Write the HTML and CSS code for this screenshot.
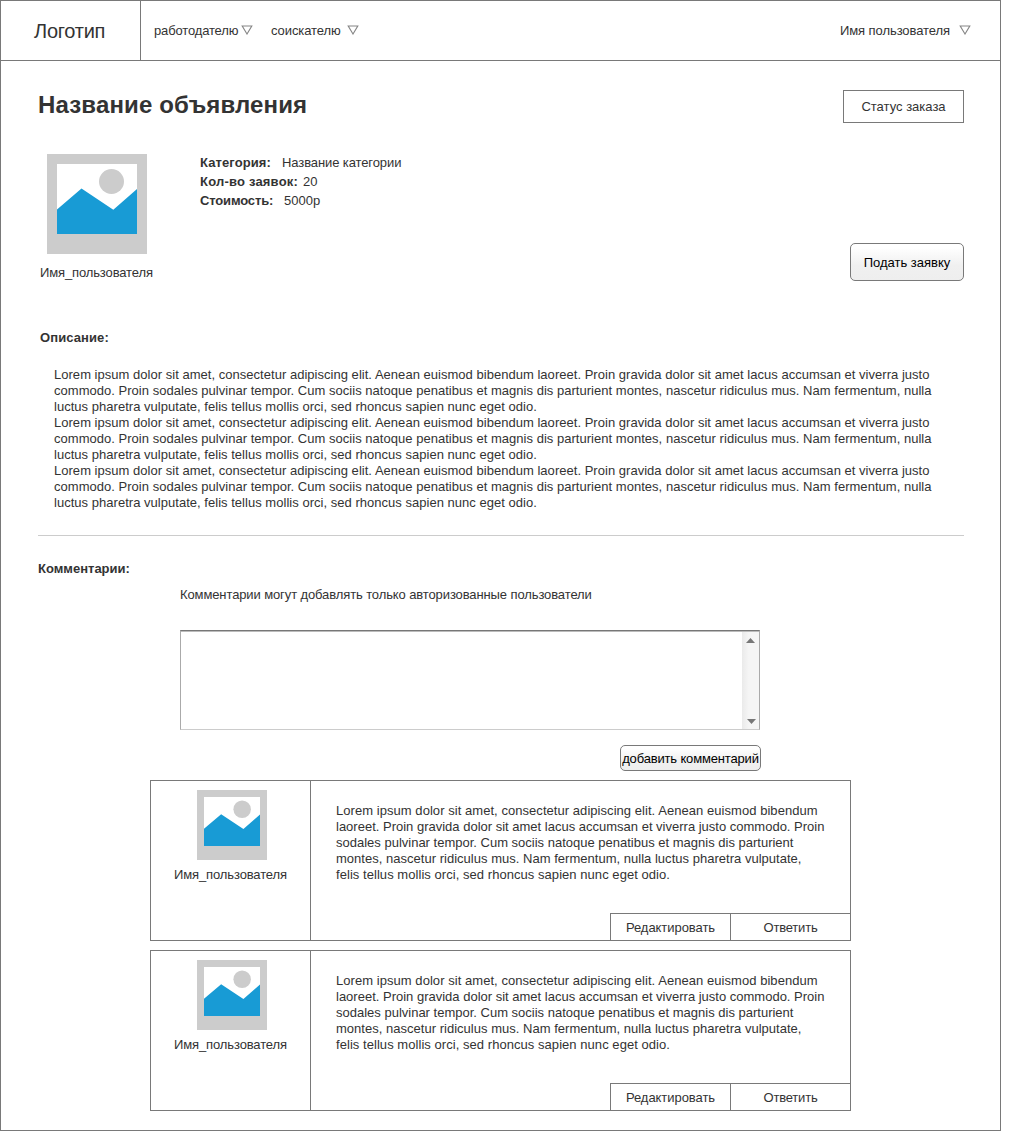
FILE: index.html
```html
<!DOCTYPE html>
<html lang="ru">
<head>
<meta charset="utf-8">
<title>Название объявления</title>
<link rel="stylesheet" href="styles.css">
</head>
<body>
<svg class="defs" width="0" height="0" aria-hidden="true">
  <symbol id="picture" viewBox="0 0 100 100">
    <rect width="100" height="100" fill="#ccc"/>
    <rect x="10" y="10" width="80" height="70" fill="#fff"/>
    <circle cx="64.5" cy="27.5" r="12.5" fill="#ccc"/>
    <path d="M10 55.5 34.5 34.5 66.3 55.7 90 35V80H10Z" fill="#189bd5"/>
  </symbol>
  <symbol id="caret" viewBox="0 0 12 10">
    <path d="M1.2 1H10.8L6 9Z" fill="#fff" stroke="#858585" stroke-width="1.1"/>
  </symbol>
</svg>
<div class="page">
  <header class="header">
    <a class="logo">Логотип</a>
    <nav class="nav">
      <a class="nav-item employer"><span>работодателю</span><svg class="caret"><use href="#caret"/></svg></a>
      <a class="nav-item seeker"><span>соискателю</span><svg class="caret"><use href="#caret"/></svg></a>
    </nav>
    <a class="nav-item account"><span>Имя пользователя</span><svg class="caret"><use href="#caret"/></svg></a>
  </header>
  <main class="main">
    <div class="title-row">
      <h1 class="title">Название объявления</h1>
      <div class="status">Статус заказа</div>
    </div>
    <section class="summary">
      <div class="author">
        <svg class="author-picture"><use href="#picture"/></svg>
        <span class="user-name">Имя_пользователя</span>
      </div>
      <dl class="facts">
        <div class="fact"><dt class="label-category">Категория:</dt><dd class="fact-category">Название категории</dd></div>
        <div class="fact"><dt class="label-count">Кол-во заявок:</dt><dd class="fact-count">20</dd></div>
        <div class="fact"><dt class="label-cost">Стоимость:</dt><dd class="fact-cost">5000р</dd></div>
      </dl>
      <button class="button apply">Подать заявку</button>
    </section>
    <h2 class="subtitle description-title">Описание:</h2>
    <p class="description">Lorem ipsum dolor sit amet, consectetur adipiscing elit. Aenean euismod bibendum laoreet. Proin gravida dolor sit amet lacus accumsan et viverra justo<br>commodo. Proin sodales pulvinar tempor. Cum sociis natoque penatibus et magnis dis parturient montes, nascetur ridiculus mus. Nam fermentum, nulla<br>luctus pharetra vulputate, felis tellus mollis orci, sed rhoncus sapien nunc eget odio.<br>Lorem ipsum dolor sit amet, consectetur adipiscing elit. Aenean euismod bibendum laoreet. Proin gravida dolor sit amet lacus accumsan et viverra justo<br>commodo. Proin sodales pulvinar tempor. Cum sociis natoque penatibus et magnis dis parturient montes, nascetur ridiculus mus. Nam fermentum, nulla<br>luctus pharetra vulputate, felis tellus mollis orci, sed rhoncus sapien nunc eget odio.<br>Lorem ipsum dolor sit amet, consectetur adipiscing elit. Aenean euismod bibendum laoreet. Proin gravida dolor sit amet lacus accumsan et viverra justo<br>commodo. Proin sodales pulvinar tempor. Cum sociis natoque penatibus et magnis dis parturient montes, nascetur ridiculus mus. Nam fermentum, nulla<br>luctus pharetra vulputate, felis tellus mollis orci, sed rhoncus sapien nunc eget odio.</p>
    <section class="comments">
      <h2 class="subtitle comments-title">Комментарии:</h2>
      <form class="comment-form">
        <p class="note">Комментарии могут добавлять только авторизованные пользователи</p>
        <div class="editor">
          <div class="scrollbar">
            <svg width="9" height="5"><path d="M0 5 4.5 0 9 5Z" fill="#777"/></svg>
            <svg class="scroll-down" width="9" height="5"><path d="M0 0 4.5 5 9 0Z" fill="#777"/></svg>
          </div>
        </div>
        <button class="button add" type="button">добавить комментарий</button>
      </form>
      <div class="comment-list">
        <article class="comment">
          <div class="comment-author">
            <svg class="comment-picture"><use href="#picture"/></svg>
            <span class="user-name">Имя_пользователя</span>
          </div>
          <div class="comment-body">
            <p class="comment-text"><span class="loose">Lorem ipsum dolor sit amet, consectetur adipiscing elit. Aenean euismod bibendum</span><br>laoreet. Proin gravida dolor sit amet lacus accumsan et viverra justo commodo. Proin<br>sodales pulvinar tempor. Cum sociis natoque penatibus et magnis dis parturient<br><span class="slight">montes, nascetur ridiculus mus. Nam fermentum, nulla luctus pharetra vulputate,</span><br><span class="loose">felis tellus mollis orci, sed rhoncus sapien nunc eget odio.</span></p>
            <div class="actions"><a class="action">Редактировать</a><a class="action reply">Ответить</a></div>
          </div>
        </article>
        <article class="comment">
          <div class="comment-author">
            <svg class="comment-picture"><use href="#picture"/></svg>
            <span class="user-name">Имя_пользователя</span>
          </div>
          <div class="comment-body">
            <p class="comment-text"><span class="loose">Lorem ipsum dolor sit amet, consectetur adipiscing elit. Aenean euismod bibendum</span><br>laoreet. Proin gravida dolor sit amet lacus accumsan et viverra justo commodo. Proin<br>sodales pulvinar tempor. Cum sociis natoque penatibus et magnis dis parturient<br><span class="slight">montes, nascetur ridiculus mus. Nam fermentum, nulla luctus pharetra vulputate,</span><br><span class="loose">felis tellus mollis orci, sed rhoncus sapien nunc eget odio.</span></p>
            <div class="actions"><a class="action">Редактировать</a><a class="action reply">Ответить</a></div>
          </div>
        </article>
      </div>
    </section>
  </main>
</div>
</body>
</html>
```
FILE: styles.css
```css
* { box-sizing: border-box; }
body {
  margin: 0;
  background: #fff;
  color: #333;
  font: 13px/16px "Liberation Sans", Arial, sans-serif;
  white-space: nowrap;
}
h1, h2, p, dl, dd { margin: 0; }
svg { display: block; flex: none; }
.defs { position: absolute; }

.page { width: 1001px; height: 1131px; border: 1px solid #797979; }

.header { display: flex; height: 60px; border-bottom: 1px solid #797979; }
.logo {
  width: 140px;
  border-right: 1px solid #797979;
  padding: 18px 0 0 33px;
  font-size: 20px;
  line-height: 24px;
  letter-spacing: -0.25px;
}
.nav { display: flex; flex: 1; }
.nav-item { display: flex; justify-content: space-between; padding-top: 22px; height: 59px; }
.employer { width: 99px; margin-left: 13px; letter-spacing: -0.15px; }
.seeker { width: 88px; margin-left: 18px; letter-spacing: -0.08px; }
.account { width: 132px; margin-right: 29px; padding-left: 1px; letter-spacing: -0.08px; }
.caret { width: 12px; height: 10px; margin-top: 2px; }

.main { padding: 29px 36px 0 37px; }
.title-row { display: flex; justify-content: space-between; height: 64px; }
.title { font-size: 24px; line-height: 30px; letter-spacing: 0.14px; }
.status {
  display: flex;
  justify-content: center;
  width: 121px;
  height: 33px;
  padding-top: 8px;
  border: 1px solid #797979;
}

.summary { display: flex; height: 176px; }
.author { width: 162px; padding-left: 2px; }
.author-picture { width: 100px; height: 100px; margin: 0 0 11px 7px; }
.user-name { letter-spacing: -0.13px; }
.facts { flex: 1; margin-top: -1px; line-height: 19px; }
.fact { display: flex; }
dt, .subtitle { font-weight: bold; }
.label-category { width: 71px; letter-spacing: 0.1px; }
.label-count { width: 98px; letter-spacing: 0.2px; }
.label-cost { width: 73px; letter-spacing: -0.15px; }
.fact-category { margin-left: 11px; letter-spacing: -0.1px; }
.fact-count { margin-left: 5px; }
.fact-cost { margin-left: 11px; }

.button {
  display: flex;
  justify-content: center;
  align-items: center;
  padding: 0;
  border: 1px solid #797979;
  border-radius: 5px;
  background: linear-gradient(#fff 10%, #f0f0f0 60%, #eee);
  color: #000;
  font: inherit;
}
.apply { width: 114px; height: 38px; margin-top: 89px; padding-top: 2px; }
.add { width: 141px; height: 26px; margin: 15px 0 0 440px; padding-top: 1px; letter-spacing: -0.16px; }

.subtitle { font-size: 13px; }
.description-title { margin-left: 2px; letter-spacing: 0.1px; }
.description {
  margin-top: 21px;
  padding: 0 0 24px 16px;
  border-bottom: 1px solid #ccc;
  letter-spacing: 0.027px;
}
.comments { padding-top: 25px; }
.comment-form { width: 723px; padding: 10px 0 0 142px; }
.note { letter-spacing: -0.11px; }
.editor {
  display: flex;
  justify-content: flex-end;
  width: 580px;
  height: 100px;
  margin-top: 27px;
  border: 1px solid #ccc;
  border-top: 1px solid #777;
  border-left-color: #aaa;
  border-right-color: #aaa;
  box-shadow: inset 0 1px #bbb;
}
.scrollbar {
  display: flex;
  flex-direction: column;
  justify-content: space-between;
  align-items: center;
  width: 17px;
  margin-top: 1px;
  padding: 6px 0 5px;
  background: linear-gradient(90deg, #eaeaea, #f5f5f5 40%);
}
.scroll-down { margin-left: 2px; }
.comment-list { display: grid; gap: 9px; margin: 9px 0 0 112px; width: 701px; }
.comment { display: flex; height: 161px; border: 1px solid #797979; }
.comment-author {
  display: flex;
  flex-direction: column;
  align-items: center;
  width: 160px;
  padding-top: 9px;
  border-right: 1px solid #797979;
}
.comment-picture { width: 70px; height: 70px; margin: 0 0 7px 2px; }
.comment-body { flex: 1; display: flex; flex-direction: column; justify-content: space-between; }
.comment-text { padding: 22px 0 0 25px; }
.loose { letter-spacing: 0.05px; }
.slight { letter-spacing: 0.02px; }
.actions { display: flex; align-self: flex-end; }
.action {
  width: 120px;
  height: 27px;
  padding-top: 6px;
  border: solid #797979;
  border-width: 1px 0 0 1px;
  text-align: center;
  letter-spacing: -0.05px;
}
.reply { letter-spacing: -0.2px; }
```
